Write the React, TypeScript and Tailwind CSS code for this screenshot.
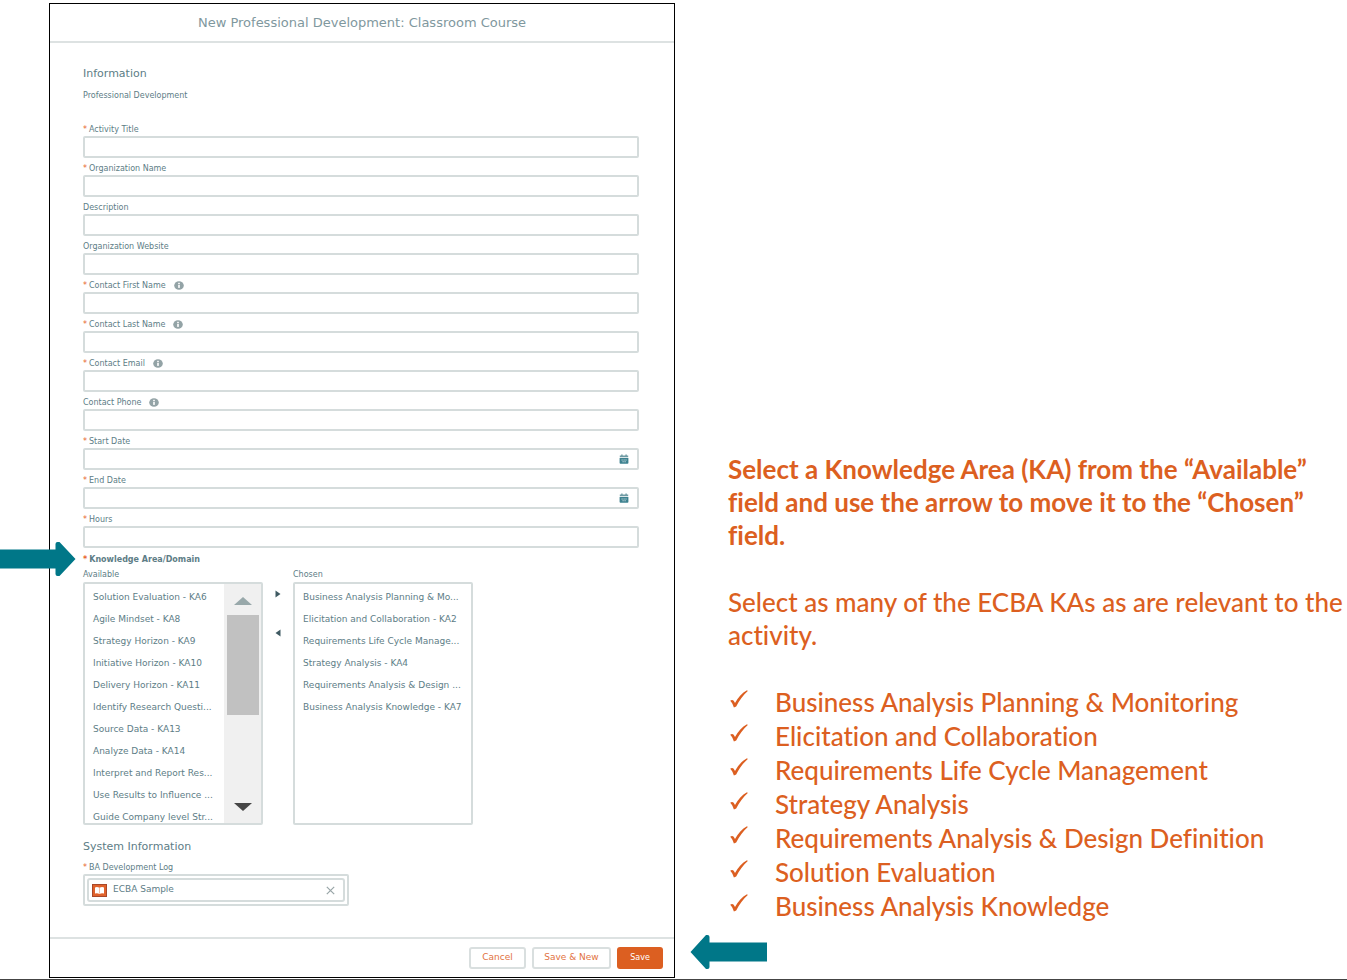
import React, { useState } from "react";

type Field = {
  id: string;
  label: string;
  required?: boolean;
  info?: boolean;
  date?: boolean;
};

const fields: Field[] = [
  { id: "title", label: "Activity Title", required: true },
  { id: "org", label: "Organization Name", required: true },
  { id: "description", label: "Description" },
  { id: "website", label: "Organization Website" },
  { id: "first", label: "Contact First Name", required: true, info: true },
  { id: "last", label: "Contact Last Name", required: true, info: true },
  { id: "email", label: "Contact Email", required: true, info: true },
  { id: "phone", label: "Contact Phone", info: true },
  { id: "start", label: "Start Date", required: true, date: true },
  { id: "end", label: "End Date", required: true, date: true },
  { id: "hours", label: "Hours", required: true },
];

const available = [
  "Solution Evaluation - KA6",
  "Agile Mindset - KA8",
  "Strategy Horizon - KA9",
  "Initiative Horizon - KA10",
  "Delivery Horizon - KA11",
  "Identify Research Questi...",
  "Source Data - KA13",
  "Analyze Data - KA14",
  "Interpret and Report Res...",
  "Use Results to Influence ...",
  "Guide Company level Str...",
];

const chosen = [
  "Business Analysis Planning & Mo...",
  "Elicitation and Collaboration - KA2",
  "Requirements Life Cycle Manage...",
  "Strategy Analysis - KA4",
  "Requirements Analysis & Design ...",
  "Business Analysis Knowledge - KA7",
];

const areas = [
  "Business Analysis Planning & Monitoring",
  "Elicitation and Collaboration",
  "Requirements Life Cycle Management",
  "Strategy Analysis",
  "Requirements Analysis & Design Definition",
  "Solution Evaluation",
  "Business Analysis Knowledge",
];

const Star = () => <span className="mr-[2px] text-[#e8622c]">*</span>;

const InfoIcon = () => (
  <svg className="ml-2 h-[9px] w-[10px]" viewBox="0 0 10 9">
    <ellipse cx="5" cy="4.5" rx="4.8" ry="4.3" fill="#93a3a6" />
    <rect x="4.2" y="1.8" width="1.6" height="1.4" fill="#fff" />
    <rect x="4.2" y="3.9" width="1.6" height="3" fill="#fff" />
  </svg>
);

const CalendarIcon = () => (
  <svg className="h-[10px] w-[10px]" viewBox="0 0 10 10">
    <path d="M2.2 0.5h1.4v1h2.8v-1h1.4v1h1.4v1.7H0.8V1.5h1.4z" fill="#6f9ba4" />
    <path d="M0.6 4h8.8v5a.8.8 0 0 1-.8.8H1.4a.8.8 0 0 1-.8-.8z" fill="#3d8290" />
    <path d="M2.5 5.5h1.2v1H2.5zM4.5 5.5h1.2v1H4.5zM6.4 5.5h1.2v1H6.4zM3.5 7.2h1.2v1H3.5zM5.5 7.2h1.2v1H5.5z" fill="#c9dde0" />
  </svg>
);

const BookIcon = () => (
  <svg className="h-[13px] w-[15px]" viewBox="0 0 15 13">
    <rect width="15" height="13" fill="#a8482a" />
    <rect x="1" y="1" width="13" height="11" fill="#e0622c" />
    <path d="M3 3.4Q5.3 2.6 7.5 3.8Q9.7 2.6 12 3.4V9.6Q9.7 8.8 7.5 10Q5.3 8.8 3 9.6z" fill="#fff" />
    <path d="M7.5 4v5.6" stroke="#f0b08f" strokeWidth="0.8" />
  </svg>
);

const CheckIcon = () => (
  <svg className="mb-[6px] ml-[2px] h-[18px] w-[18px] shrink-0" viewBox="0 0 18 18">
    <path
      d="M0.2 10.8C1.2 9.6 2.9 9.6 3.7 10.8L5 13C8.2 7.2 12 3 17 0.2L17.8 0.9C13.2 4.9 9.4 10.2 6.2 16.4L3.9 17.6C3.1 15 2 12.6 0.2 10.8Z"
      fill="#dc5f21"
    />
  </svg>
);

const FormField = ({ field }: { field: Field }) => (
  <div>
    <label htmlFor={field.id} className="flex h-[17px] items-center pt-1 text-[8px]">
      {field.required && <Star />}
      {field.label}
      {field.info && <InfoIcon />}
    </label>
    <div className="flex h-[22px] items-center rounded-[2px] border-2 border-[#d5dcdc] pr-2">
      <input id={field.id} type="text" className="h-full min-w-0 flex-1 px-2 text-[8px] outline-none" />
      {field.date && (
        <button type="button" aria-label="Pick a date">
          <CalendarIcon />
        </button>
      )}
    </div>
  </div>
);

const App = () => {
  const [log, setLog] = useState("ECBA Sample");

  return (
    <div className="border-b border-[#444] bg-white pt-[3px] font-['Lato',sans-serif]">
      <main className="mb-px grid grid-cols-[49px_626fr_672fr]">
        <div className="relative">
          <svg className="absolute top-[538px] left-0 z-10 h-[36px] w-[76px]" viewBox="0 0 76 36">
            <path d="M0 8.5H55.5V3Q55.5 1 57.5 1H59.5L75.5 18L59.5 35H57.5Q55.5 35 55.5 33V27.5H0z" fill="#007788" />
          </svg>
        </div>

        <form
          className="flex flex-col border border-black font-['DejaVu_Sans',sans-serif] text-[#5d7d86]"
          onSubmit={(e) => e.preventDefault()}
        >
          <h1 className="h-[39px] border-b-2 border-[#dde2e2] text-center text-[13px] leading-[38px] text-[#7f989e]">
            New Professional Development: Classroom Course
          </h1>

          <div className="pr-[35px] pl-[33px]">
            <h2 className="mt-[21px] text-[11px] leading-5">Information</h2>
            <p className="mt-1 text-[8px] leading-4">Professional Development</p>

            <div className="mt-[15px]">
              {fields.map((field) => (
                <FormField key={field.id} field={field} />
              ))}
            </div>

            <p className="mt-1 text-[8px] leading-4 font-bold">
              <Star />
              Knowledge Area/Domain
            </p>
            <div className="flex">
              <div className="w-[180px]">
                <p className="text-[8px] leading-[14px]">Available</p>
                <div className="flex h-[243px] overflow-hidden rounded-[2px] border-2 border-[#d5dcdc]">
                  <ul role="listbox" aria-label="Available" className="min-w-0 flex-1 pt-[2px] pl-2">
                    {available.map((item) => (
                      <li key={item} role="option" aria-selected={false} className="h-[22px] text-[9px] leading-[22px] whitespace-nowrap">
                        {item}
                      </li>
                    ))}
                  </ul>
                  <div className="flex w-[37px] flex-col items-center bg-[#f0f0f0] pt-[13px] pb-[12px]">
                    <svg className="h-2 w-[18px]" viewBox="0 0 18 8">
                      <path d="M9 0L18 8H0z" fill="#98a8aa" />
                    </svg>
                    <div className="mt-[10px] h-[100px] w-8 bg-[#c1c1c1]" />
                    <svg className="mt-auto h-2 w-[18px]" viewBox="0 0 18 8">
                      <path d="M0 0H18L9 8z" fill="#464646" />
                    </svg>
                  </div>
                </div>
              </div>

              <div className="flex w-[30px] flex-col items-center gap-[31px] pt-[22px]">
                <button type="button" aria-label="Move to Chosen">
                  <svg className="h-2 w-[6px]" viewBox="0 0 6 8">
                    <path d="M0.5 0.5L5.5 4L0.5 7.5z" fill="#3f5a62" />
                  </svg>
                </button>
                <button type="button" aria-label="Move to Available">
                  <svg className="h-2 w-[6px]" viewBox="0 0 6 8">
                    <path d="M5.5 0.5L0.5 4L5.5 7.5z" fill="#3f5a62" />
                  </svg>
                </button>
              </div>

              <div className="w-[180px]">
                <p className="text-[8px] leading-[14px]">Chosen</p>
                <ul role="listbox" aria-label="Chosen" className="h-[243px] rounded-[2px] border-2 border-[#d5dcdc] pt-[2px] pl-2">
                  {chosen.map((item) => (
                    <li key={item} role="option" aria-selected={false} className="h-[22px] text-[9px] leading-[22px] whitespace-nowrap">
                      {item}
                    </li>
                  ))}
                </ul>
              </div>
            </div>

            <h2 className="mt-3 text-[11px] leading-5">System Information</h2>
            <label htmlFor="log" className="flex h-[17px] items-center pt-1 text-[8px]">
              <Star />
              BA Development Log
            </label>
            <div className="w-[266px] rounded-[2px] border-2 border-[#d5dcdc] p-[2px]">
              <div className="flex h-6 items-center rounded-[3px] border-2 border-[#d5dcdc] pr-2 pl-[3px]">
                <BookIcon />
                <input
                  id="log"
                  type="text"
                  value={log}
                  onChange={(e) => setLog(e.target.value)}
                  className="min-w-0 flex-1 px-[6px] text-[9px] outline-none"
                />
                <button type="button" aria-label="Clear" onClick={() => setLog("")}>
                  <svg className="h-[9px] w-[9px]" viewBox="0 0 9 9">
                    <path d="M0.8 0.8L8.2 8.2M8.2 0.8L0.8 8.2" stroke="#98a5a7" strokeWidth="1.2" />
                  </svg>
                </button>
              </div>
            </div>
          </div>

          <div className="mt-[31px] flex h-[40px] items-center justify-end gap-[6px] border-t-2 border-[#dde2e2] pr-[11px] text-[9px] text-[#e2733f]">
            <button type="button" className="h-[22px] w-[57px] rounded-[3px] border-2 border-[#d9dfdf]">
              Cancel
            </button>
            <button type="button" className="h-[22px] w-[79px] rounded-[3px] border-2 border-[#d9dfdf]">
              Save & New
            </button>
            <button type="submit" className="h-[22px] w-[46px] rounded-[3px] bg-[#dc5f21] text-[8px] text-white">
              Save
            </button>
          </div>
        </form>

        <section className="relative pt-[450px] pl-[53px] text-[26px] leading-[33px] font-medium text-[#dc5f21] [font-variant-ligatures:none]">
          <p className="font-bold">
            Select a Knowledge Area (KA) from the “Available”
            <br />
            field and use the arrow to move it to the “Chosen”
            <br />
            field.
          </p>
          <p className="mt-[34px] whitespace-nowrap">
            Select as many of the ECBA KAs as are relevant to the
            <br />
            activity.
          </p>
          <ul className="mt-[33px]">
            {areas.map((area) => (
              <li key={area} className="flex h-[34px] items-center gap-[27px]">
                <CheckIcon />
                {area}
              </li>
            ))}
          </ul>
          <svg className="absolute bottom-2 left-[15px] h-[36px] w-[78px]" viewBox="0 0 78 36">
            <path d="M77 8.5H19.5V3Q19.5 1 17.5 1H16L0.5 18L16 35H17.5Q19.5 35 19.5 33V27.5H77z" fill="#007788" />
          </svg>
        </section>
      </main>
    </div>
  );
};

export default App;
